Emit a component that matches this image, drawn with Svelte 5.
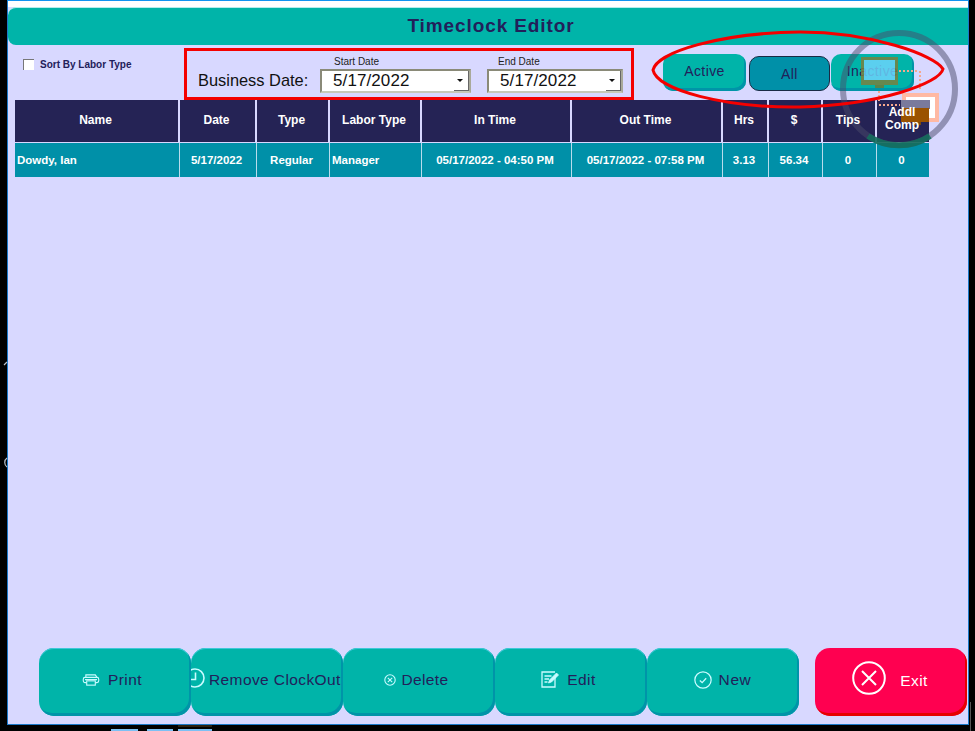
<script>
  const columns = [
    { label: 'Name', width: 165 },
    { label: 'Date', width: 77 },
    { label: 'Type', width: 73 },
    { label: 'Labor Type', width: 92 },
    { label: 'In Time', width: 150 },
    { label: 'Out Time', width: 151 },
    { label: 'Hrs', width: 46 },
    { label: '$', width: 54 },
    { label: 'Tips', width: 54 },
    { label: 'Addl Comp', width: 52 }
  ];

  const rows = [
    ['Dowdy, Ian', '5/17/2022', 'Regular', 'Manager', '05/17/2022 - 04:50 PM', '05/17/2022 - 07:58 PM', '3.13', '56.34', '0', '0']
  ];

  const gridTemplate = columns.map((c) => c.width + 'px').join(' ');
</script>

<div class="screen">
  <div class="window">
    <div class="whitebar"></div>
    <header class="title"><h1>Timeclock Editor</h1></header>

    <div class="toolbar">
      <label class="sort">
        <span class="check"></span>
        <span>Sort By Labor Type</span>
      </label>

      <div class="dates">
        <span class="biz">Business Date:</span>
        <div class="field start">
          <span class="cap">Start Date</span>
          <div class="combo"><span>5/17/2022</span><i class="drop"></i></div>
        </div>
        <div class="field end">
          <span class="cap">End Date</span>
          <div class="combo"><span>5/17/2022</span><i class="drop"></i></div>
        </div>
      </div>

      <div class="filters">
        <button class="filter">Active</button>
        <button class="filter on">All</button>
        <button class="filter last">Inactive</button>
      </div>
    </div>

    <div class="table">
      <div class="thead" style="grid-template-columns: {gridTemplate}">
        {#each columns as col}
          <div class="th"><span>{col.label}</span></div>
        {/each}
      </div>
      {#each rows as row}
        <div class="tr" style="grid-template-columns: {gridTemplate}">
          {#each row as cell, i}
            <div class="td" class:left={i === 0 || i === 3}>{cell}</div>
          {/each}
        </div>
      {/each}
    </div>

    <div class="actions">
      <button class="act print">
        <svg width="18" height="12" viewBox="0 0 20 14" fill="none" stroke="#c9fbff" stroke-width="1.3">
          <path d="M4 4V1h11l2 3" />
          <rect x="1" y="4" width="18" height="6" rx="2" />
          <path d="M3 6.500h14" />
          <rect x="5" y="8" width="10" height="5" fill="#00b4a9" />
        </svg>
        <span>Print</span>
      </button>
      <button class="act tight">
        <svg width="20" height="20" viewBox="0 0 20 20" fill="none" stroke="#c9fbff" stroke-width="1.6">
          <circle cx="10" cy="10" r="9" />
          <path d="M10.500 4.500V11.500H5" />
        </svg>
        <span>Remove ClockOut</span>
      </button>
      <button class="act del">
        <svg width="12" height="12" viewBox="0 0 12 12" fill="none" stroke="#c9fbff" stroke-width="1.100">
          <circle cx="6" cy="6" r="5.200" />
          <path d="M3.800 3.800l4.400 4.400M8.200 3.800l-4.400 4.400" />
        </svg>
        <span>Delete</span>
      </button>
      <button class="act edit">
        <svg width="19" height="17" viewBox="0 0 19 17" fill="none" stroke="#c9fbff" stroke-width="1.300">
          <path d="M14 6v10H1V1h13" />
          <path d="M3.500 5h7M3.500 8h4.500M3.500 11h3" />
          <path d="M7.500 12l1-3 7-7 2 2-7 7z" fill="#c9fbff" stroke-width="0.800" />
        </svg>
        <span>Edit</span>
      </button>
      <button class="act new">
        <svg width="18" height="18" viewBox="0 0 17 17" fill="none" stroke="#c9fbff" stroke-width="1.200">
          <circle cx="8.500" cy="8.500" r="7.700" />
          <path d="M5.500 9l2.200 2 3.800-4.200" />
        </svg>
        <span>New</span>
      </button>
      <button class="exit">
        <svg width="34" height="34" viewBox="0 0 34 34" fill="none" stroke="#fff" stroke-width="2">
          <circle cx="17" cy="17" r="15.800" />
          <path d="M10 10l14 14M24 10L10 24" />
        </svg>
        <span>Exit</span>
      </button>
    </div>
  </div>

  <!-- network icon and marker ellipse sit over the filter buttons and table header -->
  <svg class="overlay" width="975" height="731" viewBox="0 0 975 731" fill="none">
    <circle cx="899" cy="89" r="56" stroke="#4a4a6a" stroke-opacity="0.5" stroke-width="6" />
    <path d="M868 136a56 56 0 0 0 62 0" stroke="#12705c" stroke-opacity="0.85" stroke-width="6" />
    <g opacity="0.82">
      <rect x="861" y="57" width="37" height="28" fill="#7f7f3c" />
      <rect x="864" y="60" width="31" height="20" fill="#6fd6ff" />
      <rect x="875" y="85" width="9" height="3" fill="#6f7a3a" />
    </g>
    <rect x="902" y="93" width="37" height="29" fill="#ffb9a3" />
    <rect x="906" y="97" width="29" height="21" fill="#fff" />
    <rect x="901" y="100" width="29" height="9" fill="#7a7a9c" />
    <rect x="901" y="108" width="28" height="14" fill="#9a5200" />
    <rect x="912" y="122" width="9" height="3" fill="#7a4a10" />
    <path d="M899 71h20M920 71v20M879 91v12M879 105h21" stroke="#f6a88e" stroke-width="2" stroke-dasharray="2 2" />
    <path d="M653 70C657 52 720 33 800 32C870 32 935 55 943 69C940 83 880 105 800 107C725 108 657 90 653 70Z" stroke="#f40000" stroke-width="3" />
    <path d="M4 365l3-3M7 458c-3 2-3 7 0 9" stroke="#b9c0c8" stroke-width="1.200" />
    <path d="M970.500 702V731" stroke="#555" />
  </svg>
  <div class="taskbar">
    <span class="tb one"></span>
    <span class="tb two"></span>
    <span class="tb three"></span>
  </div>
</div>

<style>
  :global(body) {
    background: #000;
  }

  .screen {
    position: relative;
    width: 975px;
    height: 731px;
    overflow: hidden;
    background: #000;
    font-family: 'Liberation Sans', Arial, sans-serif;
  }

  .window {
    margin-left: 7px;
    width: 962px;
    height: 725px;
    box-sizing: border-box;
    display: flex;
    flex-direction: column;
    background: #d8d8ff;
    border: 1px solid #1a78c8;
    border-top-color: #1093f0;
  }

  .whitebar {
    height: 6px;
    background: #fff;
    flex: none;
  }

  .title {
    flex: none;
    height: 38px;
    background: #00b4a9;
    border-top: 1px solid #b5ecec;
    box-sizing: border-box;
    border-radius: 8px 0 0 8px;
    display: flex;
    align-items: center;
    justify-content: center;
    padding-left: 6px;
  }

  h1 {
    margin: 0 0 1px 0;
    font-size: 19px;
    font-weight: 700;
    letter-spacing: 0.9px;
    color: #22205a;
  }

  .toolbar {
    flex: none;
    height: 55px;
    display: flex;
    align-items: flex-start;
  }

  .sort {
    display: flex;
    align-items: center;
    gap: 6px;
    margin: 14px 0 0 15px;
    width: 161px;
    font-size: 10px;
    font-weight: 700;
    color: #22205a;
    white-space: nowrap;
  }

  .check {
    width: 11px;
    height: 11px;
    box-sizing: border-box;
    background: #fff;
    border-top: 1px solid #777;
    border-left: 1px solid #777;
  }

  .dates {
    margin-top: 3px;
    width: 450px;
    height: 52px;
    box-sizing: border-box;
    border: 3px solid #f40000;
    display: flex;
    align-items: flex-start;
    padding-left: 11px;
    color: #111;
  }

  .biz {
    margin-top: 20px;
    width: 122px;
    font-size: 16.400px;
    white-space: nowrap;
  }

  .field {
    display: flex;
    flex-direction: column;
    align-items: flex-start;
  }

  .field.end {
    margin-left: 16px;
  }

  .cap {
    height: 13px;
    margin: 4px 0 0 14px;
    font-size: 10px;
    line-height: 13px;
    color: #222;
  }

  .field.end .cap {
    margin-left: 11px;
  }

  .combo {
    width: 151px;
    height: 24px;
    margin-top: 1px;
    box-sizing: border-box;
    background: #fff;
    border: 2px solid #8a8a78;
    border-right-color: #a9a99a;
    border-bottom-color: #c8c8b8;
    display: flex;
    align-items: center;
    justify-content: space-between;
    padding-left: 11px;
    font-size: 17px;
    letter-spacing: 0.1px;
    color: #111;
  }

  .field.end .combo {
    width: 136px;
  }

  .drop {
    width: 15px;
    height: 100%;
    position: relative;
    border-right: 1px solid #666;
    border-bottom: 1px solid #666;
    box-sizing: border-box;
  }

  .drop::after {
    content: '';
    position: absolute;
    left: 3px;
    top: 8px;
    border: 3.500px solid transparent;
    border-top: 3.500px solid #111;
  }

  .filters {
    display: flex;
    align-items: flex-end;
    margin: 9px 0 0 29px;
    height: 37px;
  }

  .filter {
    width: 83px;
    height: 37px;
    padding: 0 0 4px 0;
    border: none;
    border-radius: 10px;
    background: #00b4a9;
    box-shadow: inset -2px -3px 0 #0094a8;
    font: 14px 'Liberation Sans', Arial, sans-serif;
    color: #22205a;
    letter-spacing: 0.4px;
  }

  .filter.on {
    width: 81px;
    height: 35px;
    margin-left: 3px;
    padding: 0;
    background: #0090a8;
    box-shadow: none;
    border: 1px solid #1a2a44;
  }

  .filter.last {
    margin-left: 1px;
  }

  .table {
    flex: none;
    margin: 0 0 0 7px;
    width: 914px;
  }

  .thead,
  .tr {
    display: grid;
  }

  .th {
    height: 42px;
    box-sizing: border-box;
    background: #252355;
    border-right: 2px solid #d8d8ff;
    display: flex;
    align-items: center;
    justify-content: center;
    text-align: center;
    color: #fff;
    font-size: 12px;
    font-weight: 700;
    line-height: 13px;
    padding: 0 8px 2px 6px;
  }

  /* keeps the header labels readable above the network icon */
  .th span {
    position: relative;
    z-index: 2;
  }

  .th:last-child {
    border-right: none;
    padding-bottom: 4px;
  }

  .tr {
    margin-top: 1px;
  }

  .td {
    height: 34px;
    box-sizing: border-box;
    background: #0090a8;
    border-right: 1px solid #b9dcec;
    display: flex;
    align-items: center;
    justify-content: center;
    padding-right: 3px;
    color: #fff;
    font-size: 11.500px;
    font-weight: 700;
    white-space: nowrap;
  }

  .td:last-child {
    border-right: none;
  }

  .td.left {
    justify-content: flex-start;
    padding-left: 2px;
  }

  .actions {
    margin-top: auto;
    margin-bottom: 8px;
    margin-left: 31px;
    display: flex;
  }

  .act,
  .exit {
    width: 152px;
    height: 68px;
    box-sizing: border-box;
    padding: 0 0 5px 0;
    border: none;
    border-radius: 15px;
    display: flex;
    align-items: center;
    justify-content: center;
    gap: 7px;
    font: 15.500px 'Liberation Sans', Arial, sans-serif;
    letter-spacing: 0.4px;
    color: #22205a;
    white-space: nowrap;
  }

  .act svg,
  .exit svg {
    flex: none;
  }

  .act {
    background: #00b4a9;
    box-shadow: inset -2px -3px 0 #0094a8, inset 0 1px 0 #3fc8d8;
    overflow: hidden;
  }

  .act.print {
    gap: 8px;
    padding-right: 6px;
  }

  .act.tight {
    gap: 4px;
    justify-content: flex-start;
    padding-left: 0;
  }

  .act.tight svg {
    margin-left: -6px;
    margin-top: -4px;
  }

  .act.del {
    gap: 5px;
    padding-right: 5px;
  }

  .act.edit {
    padding-right: 5px;
  }

  .act.new {
    padding-right: 1px;
  }

  .act.new span {
    letter-spacing: 0.6px;
  }

  .exit {
    margin-left: 16px;
    background: #ff0050;
    box-shadow: inset -2px -3px 0 #e60000;
    color: #fff;
    gap: 14px;
    padding: 0 2px 9px 0;
  }

  .exit span {
    margin-top: 6px;
  }

  .overlay {
    position: absolute;
    left: 0;
    top: 0;
    pointer-events: none;
  }

  .taskbar {
    position: absolute;
    left: 0;
    bottom: 0;
    width: 100%;
    height: 2px;
  }

  .tb {
    position: absolute;
    top: 0;
    height: 2px;
    background: #7cc0f4;
  }

  .tb.one { left: 111px; width: 27px; }
  .tb.two { left: 147px; width: 26px; }
  .tb.three {
    left: 178px;
    width: 34px;
    box-shadow: 0 -4px 0 #2a2010;
  }
</style>
